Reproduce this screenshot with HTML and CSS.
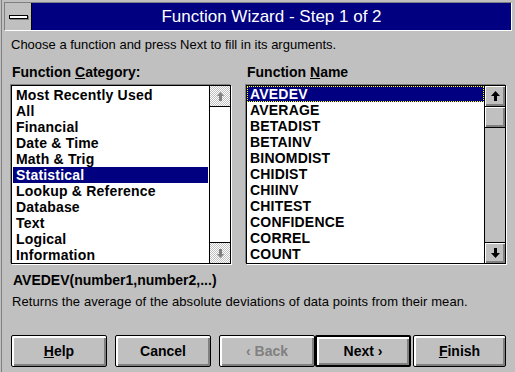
FILE: index.html
```html
<!DOCTYPE html>
<html>
<head>
<meta charset="utf-8">
<link rel="stylesheet" href="styles.css">
</head>
<body>
<div class="window">
  <div class="titlebar">
    <div class="sysmenu"><span class="sysbar"></span></div>
    <div class="caption">Function Wizard - Step 1 of 2</div>
  </div>
  <div class="content">
    <p class="intro">Choose a function and press Next to fill in its arguments.</p>
    <div class="columns">
      <div class="col col-cat">
        <div class="label">Function <u>C</u>ategory:</div>
        <div class="listbox">
          <ul class="items">
            <li>Most Recently Used</li>
            <li>All</li>
            <li>Financial</li>
            <li>Date &amp; Time</li>
            <li>Math &amp; Trig</li>
            <li class="sel">Statistical</li>
            <li>Lookup &amp; Reference</li>
            <li>Database</li>
            <li>Text</li>
            <li>Logical</li>
            <li>Information</li>
          </ul>
          <div class="scrollbar disabled">
            <div class="sbtn up"><svg width="7" height="9" viewBox="0 0 7 9"><path d="M3.5 0 L7 4 H5 V9 H2 V4 H0 Z" fill="#808080"/></svg></div>
            <div class="track"></div>
            <div class="sbtn down"><svg width="7" height="9" viewBox="0 0 7 9"><path d="M3.5 9 L7 5 H5 V0 H2 V5 H0 Z" fill="#808080"/></svg></div>
          </div>
        </div>
      </div>
      <div class="col col-name">
        <div class="label">Function <u>N</u>ame</div>
        <div class="listbox">
          <ul class="items flush">
            <li class="sel focus">AVEDEV</li>
            <li>AVERAGE</li>
            <li>BETADIST</li>
            <li>BETAINV</li>
            <li>BINOMDIST</li>
            <li>CHIDIST</li>
            <li>CHIINV</li>
            <li>CHITEST</li>
            <li>CONFIDENCE</li>
            <li>CORREL</li>
            <li>COUNT</li>
          </ul>
          <div class="scrollbar active">
            <div class="sbtn up"><svg width="9" height="10" viewBox="0 0 9 10"><path d="M4.5 0 L9 5 H6 V10 H3 V5 H0 Z" fill="#000"/></svg></div>
            <div class="thumb"></div>
            <div class="track"></div>
            <div class="sbtn down"><svg width="9" height="10" viewBox="0 0 9 10"><path d="M4.5 10 L9 5 H6 V0 H3 V5 H0 Z" fill="#000"/></svg></div>
          </div>
        </div>
      </div>
    </div>
    <div class="syntax">AVEDEV(number1,number2,...)</div>
    <p class="desc">Returns the average of the absolute deviations of data points from their mean.</p>
    <div class="buttons">
      <button class="btn"><u>H</u>elp</button>
      <button class="btn">Cancel</button>
      <button class="btn disabled">&#8249; Back</button>
      <button class="btn default">Next &#8250;</button>
      <button class="btn finish"><u>F</u>inish</button>
    </div>
  </div>
</div>
</body>
</html>
```
FILE: styles.css
```css
html, body {
  margin: 0;
  padding: 0;
}
body {
  width: 515px;
  height: 372px;
  overflow: hidden;
  background: #c0c0c0;
  font-family: "Liberation Sans", Arial, sans-serif;
  font-size: 13px;
  color: #000;
}
.window {
  height: 372px;
  box-sizing: border-box;
  margin-left: 1px;
  border-left: 1px solid #808080;
  padding-top: 2px;
}
.titlebar {
  display: flex;
  height: 27px;
  margin: 0 3px 0 2px;
  border-top: 1px solid #808080;
  border-left: 1px solid #808080;
  border-bottom: 1px solid #fff;
  border-right: 1px solid #fff;
}
.sysmenu {
  width: 26px;
  border-right: 1px solid #000;
  background: #c0c0c0;
  display: flex;
  align-items: center;
  justify-content: center;
}
.sysbar {
  display: block;
  width: 17px;
  height: 2px;
  background: #fff;
  border: 1px solid #000;
  box-shadow: 1px 1px 0 #808080;
  margin-top: 1px;
}
.caption {
  flex: 1;
  background: #000080;
  color: #fff;
  font-size: 17px;
  display: flex;
  align-items: center;
  justify-content: center;
  padding-top: 1px;
}
.content {
  padding: 0 9px 0 9px;
}
.intro {
  margin: 6px 0 0 0;
  line-height: 16px;
}
.columns {
  display: flex;
  gap: 15px;
  margin-top: 11px;
}
.col-cat { width: 220px; }
.col-name { width: 260px; }
.label {
  font-weight: bold;
  font-size: 14px;
  line-height: 16px;
  margin-bottom: 5px;
  padding-left: 1px;
}
.listbox {
  display: flex;
  height: 179px;
  box-sizing: border-box;
  border: 1px solid #000;
  background: #fff;
  box-shadow: -1px -1px 0 #808080, 1px 1px 0 #fff;
}
.items {
  flex: 1;
  list-style: none;
  margin: 0;
  padding: 1px;
  font-weight: bold;
  font-size: 14px;
  letter-spacing: 0.2px;
}
.items.flush {
  padding: 0;
}
.items li {
  height: 16px;
  line-height: 16px;
  padding-left: 3px;
  white-space: nowrap;
}
.items li.sel {
  background: #000080;
  color: #fff;
}
.items li.focus {
  outline: 1px dotted #ffff00;
  outline-offset: -1px;
}
.scrollbar {
  width: 20px;
  border-left: 1px solid #000;
  display: flex;
  flex-direction: column;
}
.scrollbar .track {
  flex: 1;
}
.scrollbar.disabled .track {
  background: #fff;
}
.scrollbar.active .track {
  background: #c0c0c0;
}
.sbtn {
  height: 21px;
  box-sizing: border-box;
  display: flex;
  align-items: center;
  justify-content: center;
}
.sbtn.up { border-bottom: 1px solid #000; }
.sbtn.down { border-top: 1px solid #000; }
.scrollbar.disabled .sbtn {
  background: repeating-conic-gradient(#c0c0c0 0 25%, #fff 0 50%) 0 0 / 2px 2px;
}
.scrollbar.active .sbtn,
.thumb {
  background: #c0c0c0;
  box-shadow: inset 1px 1px 0 #fff, inset -1px -1px 0 #808080, inset -2px -2px 0 #808080;
}
.thumb {
  height: 21px;
  box-sizing: border-box;
  border-bottom: 1px solid #000;
}
.syntax {
  font-weight: bold;
  font-size: 14px;
  line-height: 16px;
  margin-top: 8px;
  padding-left: 2px;
}
.desc {
  margin: 6px 0 0 0;
  line-height: 16px;
  padding-left: 1px;
  letter-spacing: 0.09px;
}
.buttons {
  display: flex;
  margin-top: 25px;
}
.btn {
  width: 96px;
  height: 32px;
  box-sizing: border-box;
  margin: 0 8px 0 0;
  padding: 0;
  border: 1px solid #000;
  border-radius: 2px;
  background: #c0c0c0;
  box-shadow: inset 1px 1px 0 #fff, inset 2px 2px 0 #fff, inset -1px -1px 0 #808080, inset -2px -2px 0 #808080;
  font-family: "Liberation Sans", Arial, sans-serif;
  font-size: 14px;
  font-weight: bold;
  color: #000;
}
.btn.disabled {
  color: #808080;
  margin-right: 0;
}
.btn.default {
  border: 2px solid #000;
  margin-right: 2px;
}
.btn.finish {
  width: 93px;
  margin-right: 0;
}
```
